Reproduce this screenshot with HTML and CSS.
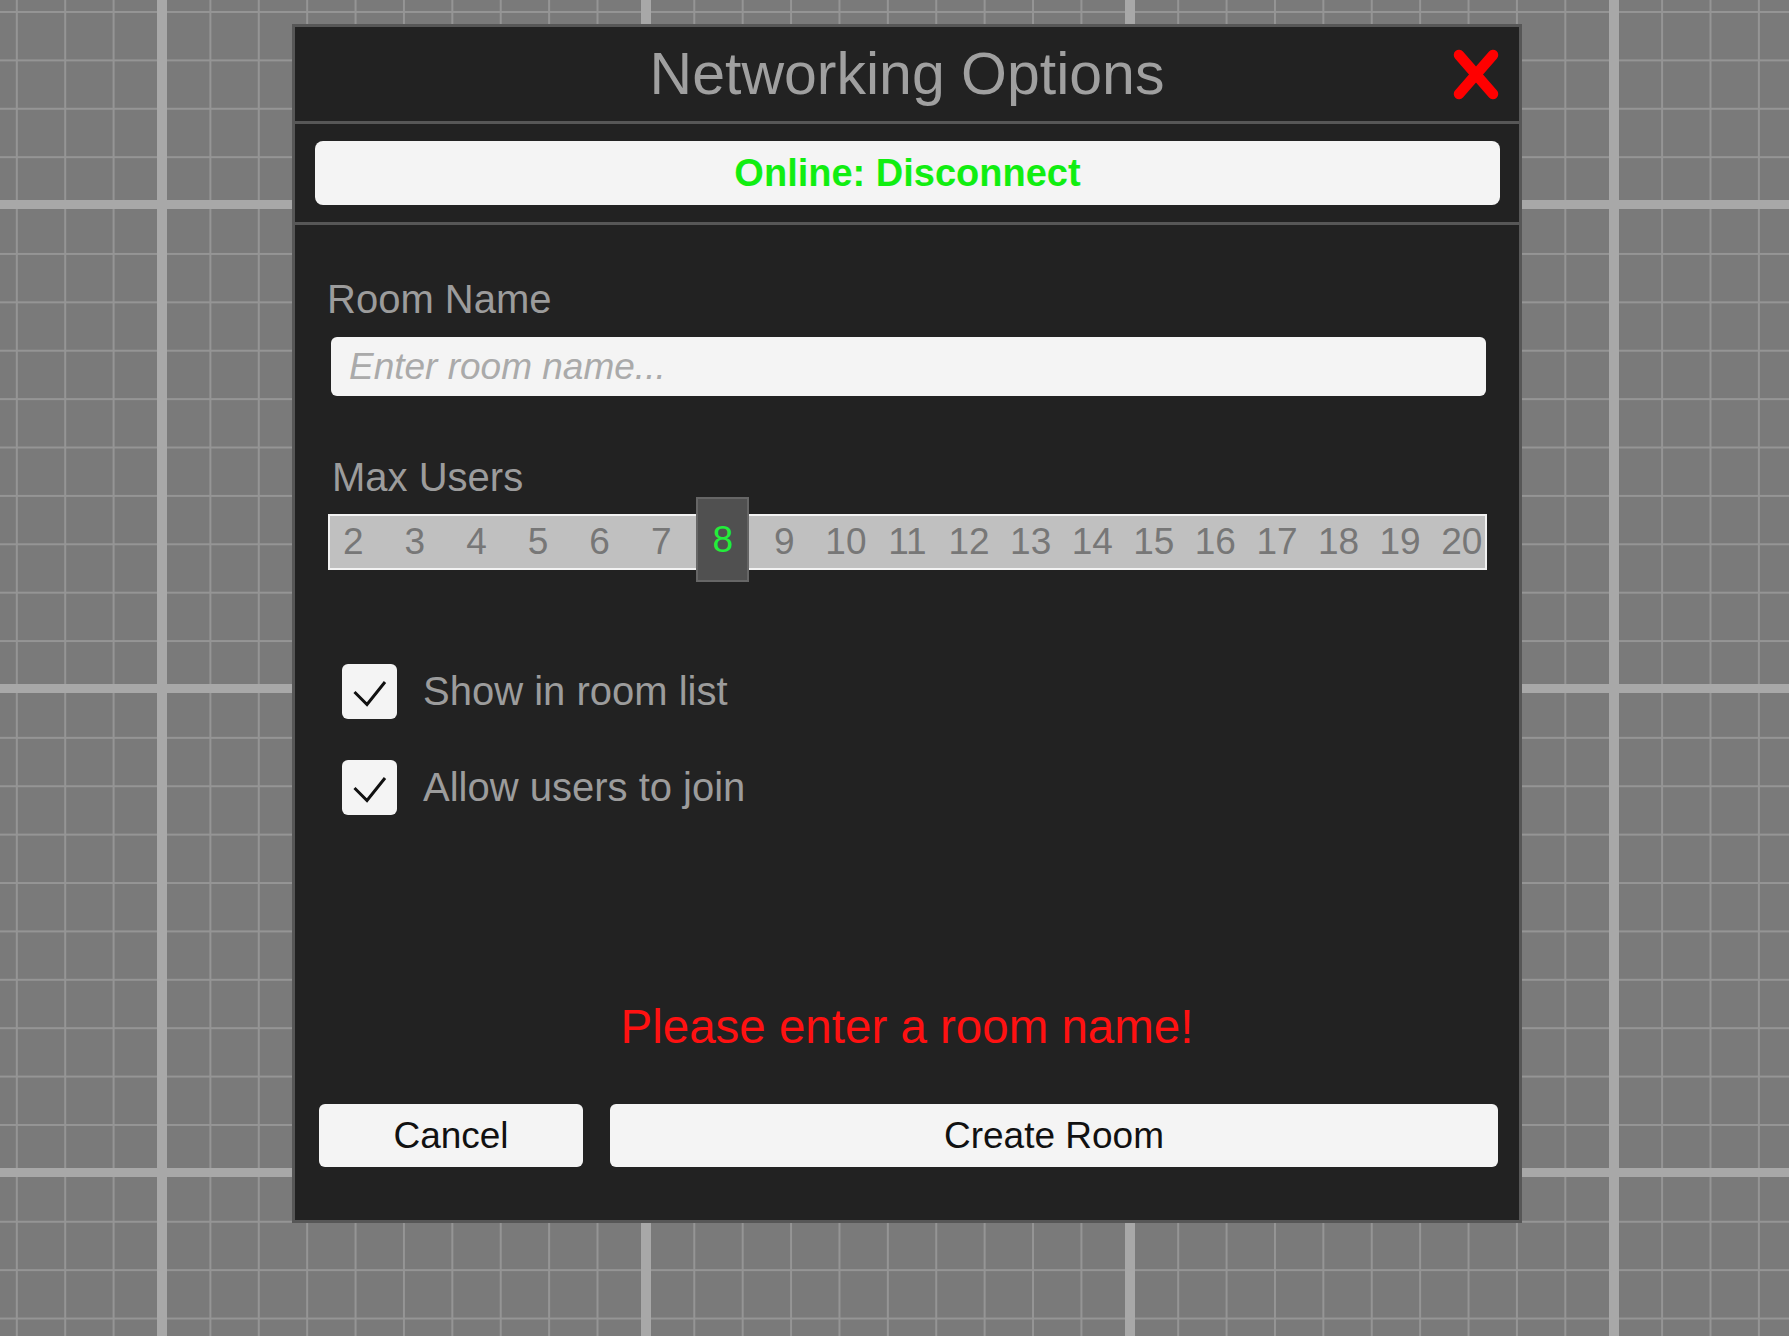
FILE: index.html
```html
<!DOCTYPE html>
<html lang="en">
<head>
<meta charset="utf-8">
<title>Networking Options</title>
<link rel="stylesheet" href="styles.css">
</head>
<body>
<div class="dialog">
  <div class="header">
    <h1 class="title">Networking Options</h1>
    <button class="close" aria-label="Close">
      <svg viewBox="0 0 46 51" width="46" height="51"><path d="M6 6 L40 45 M40 6 L6 45" stroke="#ff0000" stroke-width="10.5" stroke-linecap="round" fill="none"/></svg>
    </button>
  </div>
  <div class="status">
    <button class="status-btn">Online: Disconnect</button>
  </div>
  <div class="content">
    <div class="label label-room">Room Name</div>
    <div class="input"><span class="placeholder">Enter room name...</span></div>
    <div class="label label-max">Max Users</div>
    <div class="slider">
      <div class="ticks">
        <span>2</span><span>3</span><span>4</span><span>5</span><span>6</span><span>7</span><span class="sel"><span class="handle">8</span></span><span>9</span><span>10</span><span>11</span><span>12</span><span>13</span><span>14</span><span>15</span><span>16</span><span>17</span><span>18</span><span>19</span><span>20</span>
      </div>
    </div>
    <div class="check-row first">
      <span class="box"><svg viewBox="0 0 55 55" width="55" height="55"><path d="M12.5 28 L25 40.5 L43 18" stroke="#111" stroke-width="3" fill="none" stroke-linejoin="miter"/></svg></span>
      <span class="check-label">Show in room list</span>
    </div>
    <div class="check-row second">
      <span class="box"><svg viewBox="0 0 55 55" width="55" height="55"><path d="M12.5 28 L25 40.5 L43 18" stroke="#111" stroke-width="3" fill="none" stroke-linejoin="miter"/></svg></span>
      <span class="check-label">Allow users to join</span>
    </div>
    <div class="error">Please enter a room name!</div>
    <div class="actions">
      <button class="btn cancel">Cancel</button>
      <button class="btn create">Create Room</button>
    </div>
  </div>
</div>
</body>
</html>
```
FILE: styles.css
```css
html, body {
  margin: 0;
  padding: 0;
}
body {
  width: 1789px;
  height: 1336px;
  overflow: hidden;
  font-family: "Liberation Sans", Arial, sans-serif;
  background-color: #7a7a7a;
  background-image:
    linear-gradient(90deg, #a8a8a8 10px, transparent 10px),
    linear-gradient(180deg, #a8a8a8 9px, transparent 9px),
    linear-gradient(90deg, #959595 2px, transparent 2px),
    linear-gradient(180deg, #959595 2px, transparent 2px);
  background-size: 484px 100%, 100% 484px, 48.4px 100%, 100% 48.4px;
  background-position: 157px 0, 0 200px, 161px 0, 0 11px;
}
.dialog {
  margin: 24px 0 0 292px;
  width: 1230px;
  height: 1199px;
  box-sizing: border-box;
  border: 3px solid #575757;
  background: #222222;
  display: flex;
  flex-direction: column;
}
.header {
  position: relative;
  height: 94px;
  border-bottom: 3px solid #575757;
  display: flex;
  align-items: center;
  justify-content: center;
}
.title {
  margin: 0;
  font-size: 59px;
  font-weight: normal;
  color: #a0a0a0;
  line-height: 1;
}
.close {
  position: absolute;
  right: 20px;
  top: 22px;
  width: 46px;
  height: 51px;
  padding: 0;
  border: 0;
  background: none;
}
.close svg { display: block; }
.status {
  height: 101px;
  border-bottom: 3px solid #575757;
  box-sizing: border-box;
  padding: 17px 19px 0 20px;
}
.status-btn {
  display: block;
  width: 100%;
  height: 64px;
  border: 0;
  border-radius: 8px;
  background: #f4f4f4;
  color: #11ee11;
  font-family: "Liberation Sans", Arial, sans-serif;
  font-weight: bold;
  font-size: 38px;
  padding: 0;
}
.content {
  display: flex;
  flex-direction: column;
  align-items: flex-start;
}
.label {
  font-size: 40px;
  line-height: 46px;
  color: #9c9c9c;
}
.label-room {
  margin: 51px 0 0 32px;
}
.input {
  margin: 15px 0 0 36px;
  width: 1155px;
  height: 59px;
  box-sizing: border-box;
  background: #f4f4f4;
  border-radius: 6px;
  padding-left: 18px;
  display: flex;
  align-items: center;
}
.placeholder {
  font-style: italic;
  font-size: 37px;
  color: #aaaaaa;
}
.label-max {
  margin: 58px 0 0 37px;
}
.slider {
  margin: 14px 0 0 33px;
  width: 1159px;
  height: 56px;
  box-sizing: border-box;
  border: 2px solid #f2f2f2;
  background: #c0c0c0;
}
.ticks {
  margin: 0 -7.5px;
  height: 100%;
  display: grid;
  grid-template-columns: repeat(19, 1fr);
  align-items: center;
}
.ticks > span {
  text-align: center;
  font-size: 37px;
  line-height: 52px;
  color: #777777;
}
.ticks > .sel {
  display: flex;
  justify-content: center;
}
.handle {
  width: 53px;
  height: 85px;
  margin: -19px 0 -14px;
  box-sizing: border-box;
  border: 2px solid #666666;
  background: #505050;
  color: #22ee3a;
  font-size: 37px;
  display: flex;
  align-items: center;
  justify-content: center;
}
.check-row {
  display: flex;
  align-items: center;
  margin-left: 47px;
  height: 55px;
}
.check-row.first { margin-top: 94px; }
.check-row.second { margin-top: 41px; }
.box {
  width: 55px;
  height: 55px;
  border-radius: 6px;
  background: #f4f4f4;
  display: block;
}
.box svg { display: block; }
.check-label {
  margin-left: 26px;
  font-size: 40px;
  color: #9c9c9c;
}
.error {
  align-self: stretch;
  text-align: center;
  margin-top: 184px;
  font-size: 47.5px;
  line-height: 56px;
  color: #ff1111;
}
.actions {
  display: flex;
  gap: 27px;
  margin: 49px 0 0 24px;
}
.btn {
  height: 63px;
  border: 0;
  border-radius: 6px;
  background: #f4f4f4;
  color: #111111;
  font-family: "Liberation Sans", Arial, sans-serif;
  font-size: 37px;
  padding: 0;
}
.cancel { width: 264px; }
.create { width: 888px; }
```
